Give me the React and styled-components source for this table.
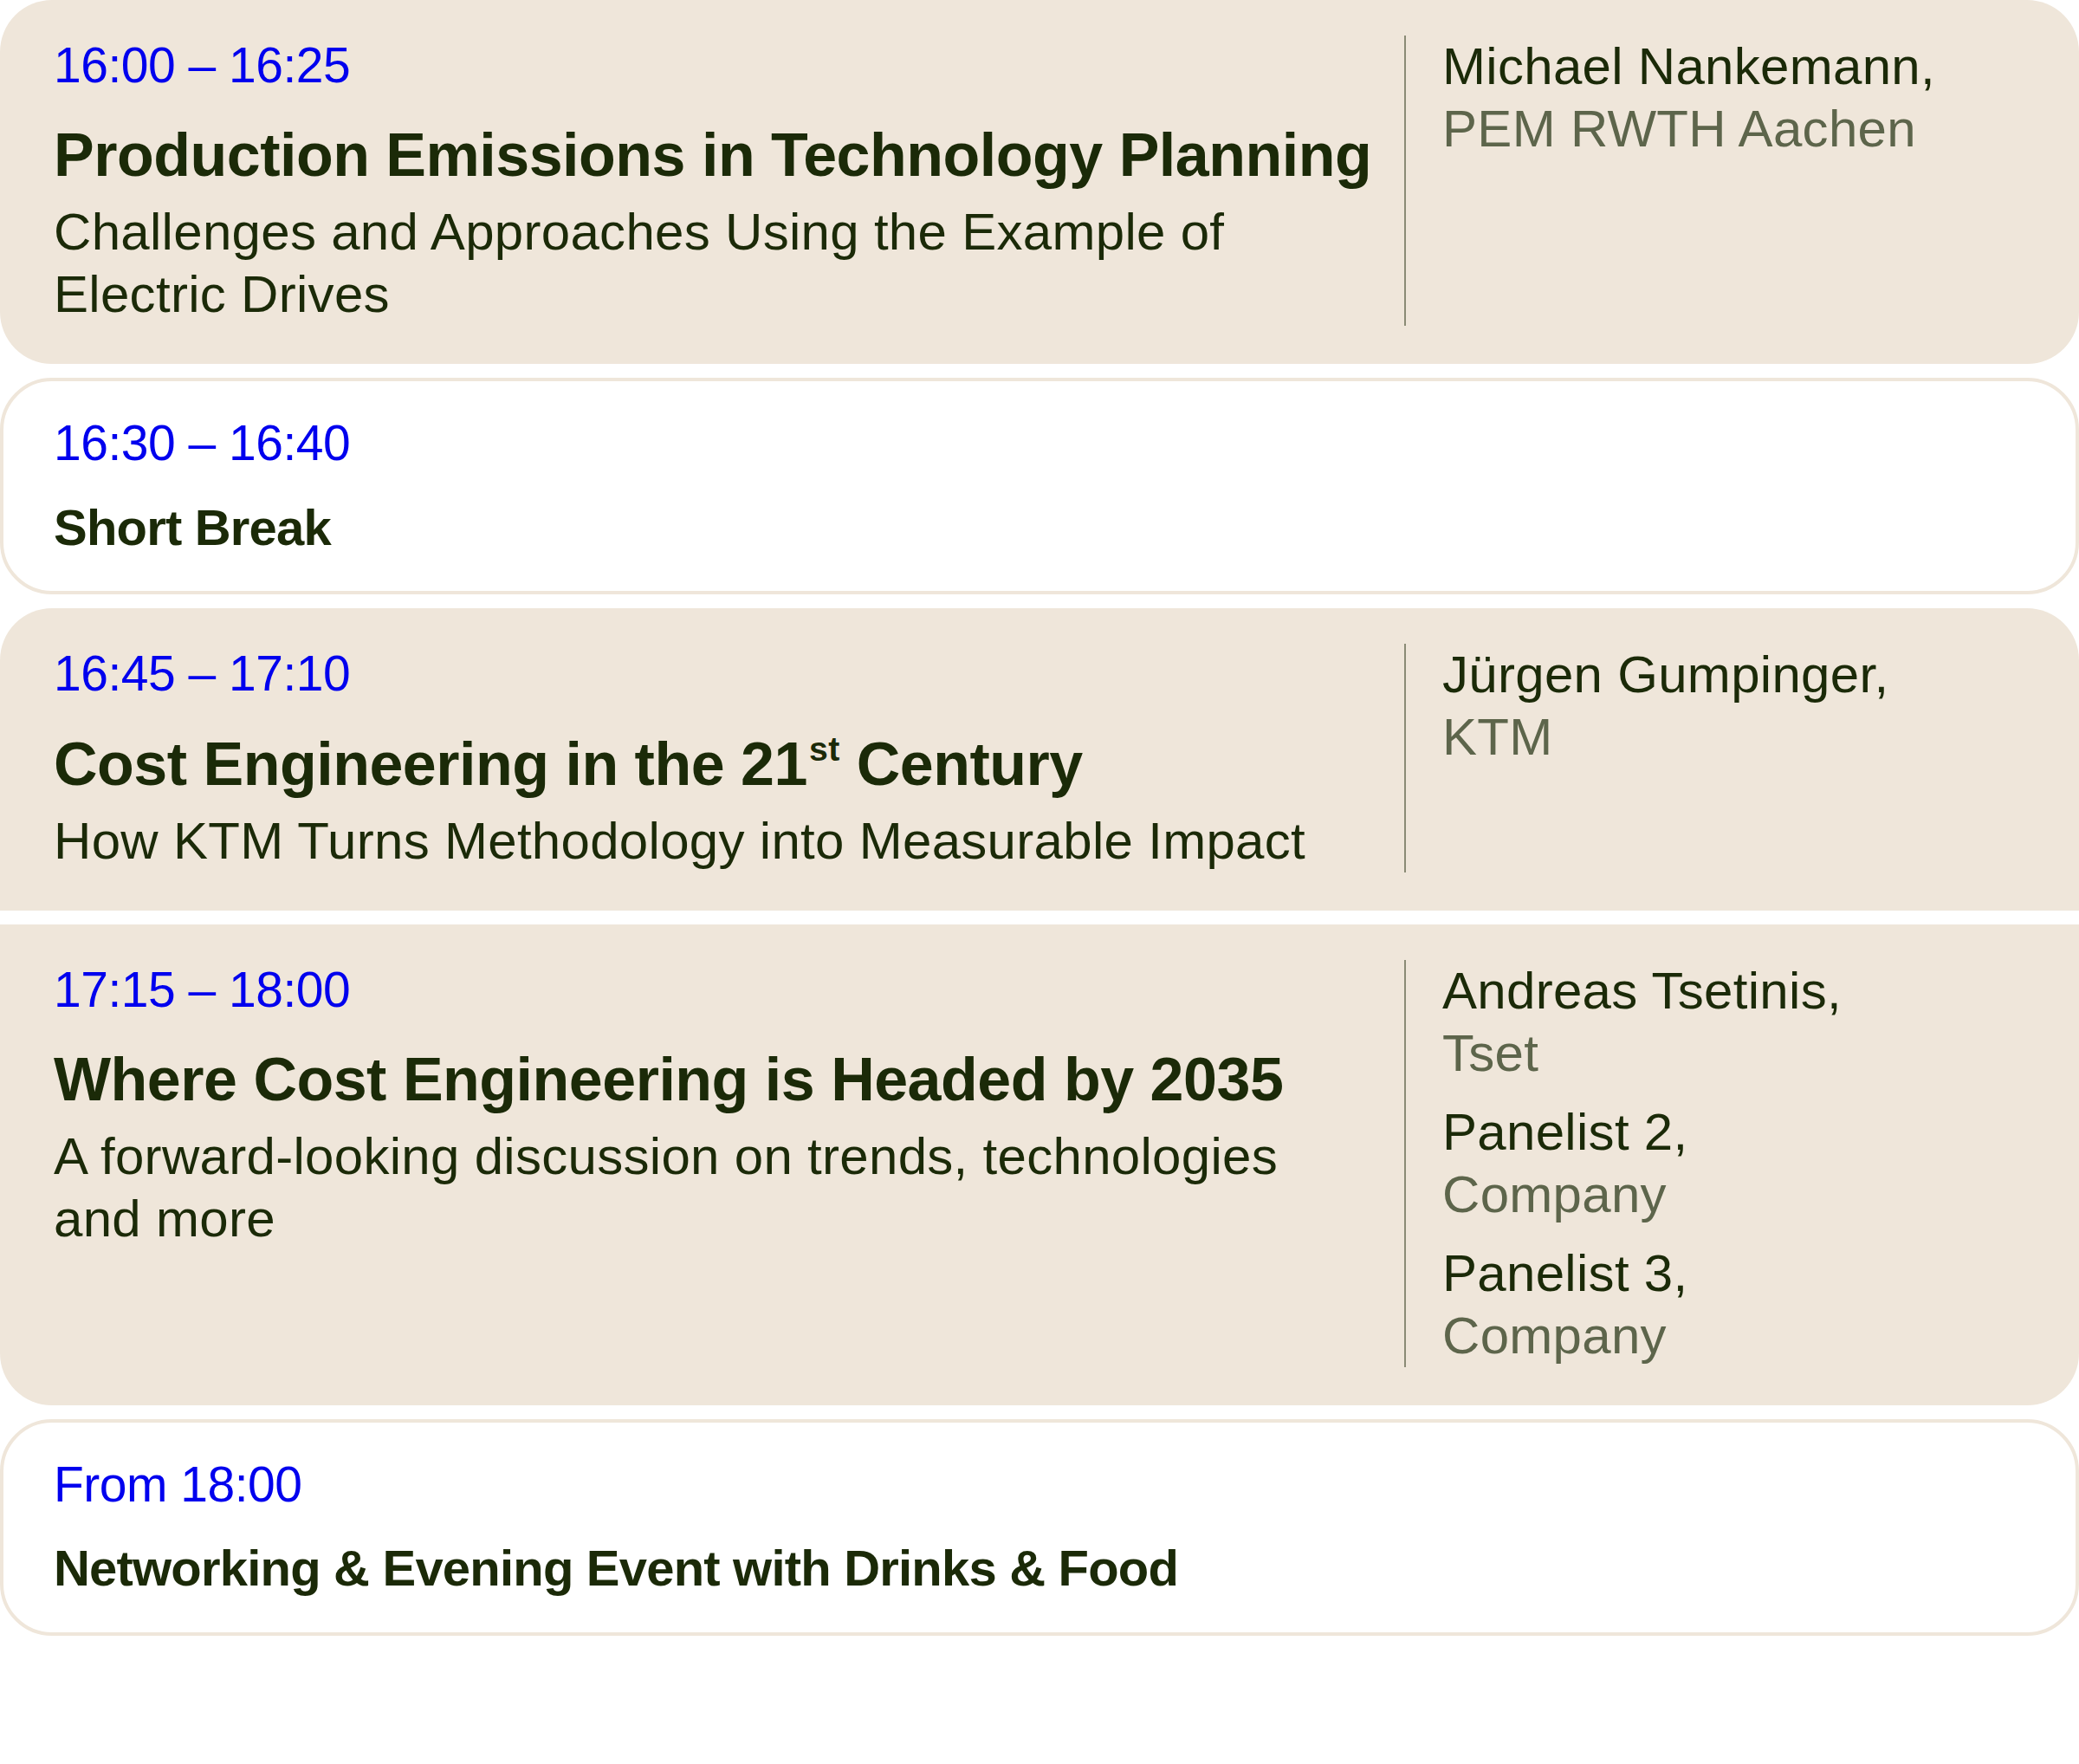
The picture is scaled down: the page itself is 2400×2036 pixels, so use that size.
import React from "react";
import styled, { createGlobalStyle, css } from "styled-components";

const GlobalStyle = createGlobalStyle`
  html, body {
    margin: 0;
    padding: 0;
    background: #ffffff;
  }
  body {
    font-family: "Liberation Sans", Arial, Helvetica, sans-serif;
    color: #1b2a08;
    -webkit-font-smoothing: antialiased;
  }
  * { box-sizing: border-box; }
`;

const Schedule = styled.div`
  display: flex;
  flex-direction: column;
  gap: 16px;
  width: 100%;
`;

const Card = styled.section`
  width: 100%;
  border-radius: 60px;
  ${({ $flatTop }) =>
    $flatTop &&
    css`
      border-top-left-radius: 0;
      border-top-right-radius: 0;
    `}
  ${({ $flatBottom }) =>
    $flatBottom &&
    css`
      border-bottom-left-radius: 0;
      border-bottom-right-radius: 0;
    `}
  ${({ $variant }) =>
    $variant === "outlined"
      ? css`
          background: #ffffff;
          border: 4px solid #efe6da;
          padding: 37px 58px 39px;
        `
      : css`
          background: #efe6da;
          padding: 41px 62px 44px;
          display: grid;
          grid-template-columns: minmax(0, 1fr) 2px 673px;
          column-gap: 42px;
        `}
`;

const Main = styled.div`
  display: flex;
  flex-direction: column;
  min-width: 0;
`;

const Time = styled.div`
  font-size: 57px;
  line-height: 68.4px;
  letter-spacing: -0.5px;
  color: #0000ee;
  margin-bottom: 28px;
`;

const Title = styled.h2`
  margin: 0;
  font-size: 70px;
  line-height: 84px;
  font-weight: 700;
  letter-spacing: -0.5px;
  white-space: nowrap;
  color: #1b2a08;
`;

const Sup = styled.span`
  font-size: 0.56em;
  line-height: 0;
  position: relative;
  top: -0.72em;
  margin-left: 2px;
  letter-spacing: 0.5px;
`;

const Subtitle = styled.p`
  margin: 11px 0 0;
  font-size: 60px;
  line-height: 72px;
  letter-spacing: 0.3px;
  color: #1b2a08;
`;

const BreakLabel = styled.div`
  font-size: 58px;
  line-height: 69.6px;
  font-weight: 700;
  letter-spacing: -0.8px;
  color: #1b2a08;
`;

const Divider = styled.div`
  width: 2px;
  align-self: stretch;
  background: #8a8b75;
`;

const Speakers = styled.div`
  display: flex;
  flex-direction: column;
  gap: 19px;
`;

const Speaker = styled.div`
  display: flex;
  flex-direction: column;
  font-size: 60px;
  line-height: 72px;
  letter-spacing: 0.3px;
`;

const Name = styled.span`
  color: #1b2a08;
`;

const Org = styled.span`
  color: #5d654b;
`;

const items = [
  {
    type: "talk",
    time: "16:00 – 16:25",
    title: "Production Emissions in Technology Planning",
    subtitle: "Challenges and Approaches Using the Example of Electric Drives",
    speakers: [{ name: "Michael Nankemann,", org: "PEM RWTH Aachen" }],
  },
  { type: "break", time: "16:30 – 16:40", label: "Short Break" },
  {
    type: "talk",
    time: "16:45 – 17:10",
    title: (
      <>
        Cost Engineering in the 21<Sup>st</Sup> Century
      </>
    ),
    subtitle: "How KTM Turns Methodology into Measurable Impact",
    speakers: [{ name: "Jürgen Gumpinger,", org: "KTM" }],
    flatBottom: true,
  },
  {
    type: "talk",
    time: "17:15 – 18:00",
    title: "Where Cost Engineering is Headed by 2035",
    subtitle: "A forward-looking discussion on trends, technologies and more",
    speakers: [
      { name: "Andreas Tsetinis,", org: "Tset" },
      { name: "Panelist 2,", org: "Company" },
      { name: "Panelist 3,", org: "Company" },
    ],
    flatTop: true,
  },
  {
    type: "break",
    time: "From 18:00",
    label: "Networking & Evening Event with Drinks & Food",
  },
];

function TalkCard({ item }) {
  return (
    <Card $variant="filled" $flatTop={item.flatTop} $flatBottom={item.flatBottom}>
      <Main>
        <Time>{item.time}</Time>
        <Title>{item.title}</Title>
        <Subtitle>{item.subtitle}</Subtitle>
      </Main>
      <Divider />
      <Speakers>
        {item.speakers.map((s, i) => (
          <Speaker key={i}>
            <Name>{s.name}</Name>
            <Org>{s.org}</Org>
          </Speaker>
        ))}
      </Speakers>
    </Card>
  );
}

function BreakCard({ item }) {
  return (
    <Card $variant="outlined">
      <Time>{item.time}</Time>
      <BreakLabel>{item.label}</BreakLabel>
    </Card>
  );
}

export default function App() {
  return (
    <>
      <GlobalStyle />
      <Schedule>
        {items.map((item, i) =>
          item.type === "talk" ? (
            <TalkCard key={i} item={item} />
          ) : (
            <BreakCard key={i} item={item} />
          )
        )}
      </Schedule>
    </>
  );
}
